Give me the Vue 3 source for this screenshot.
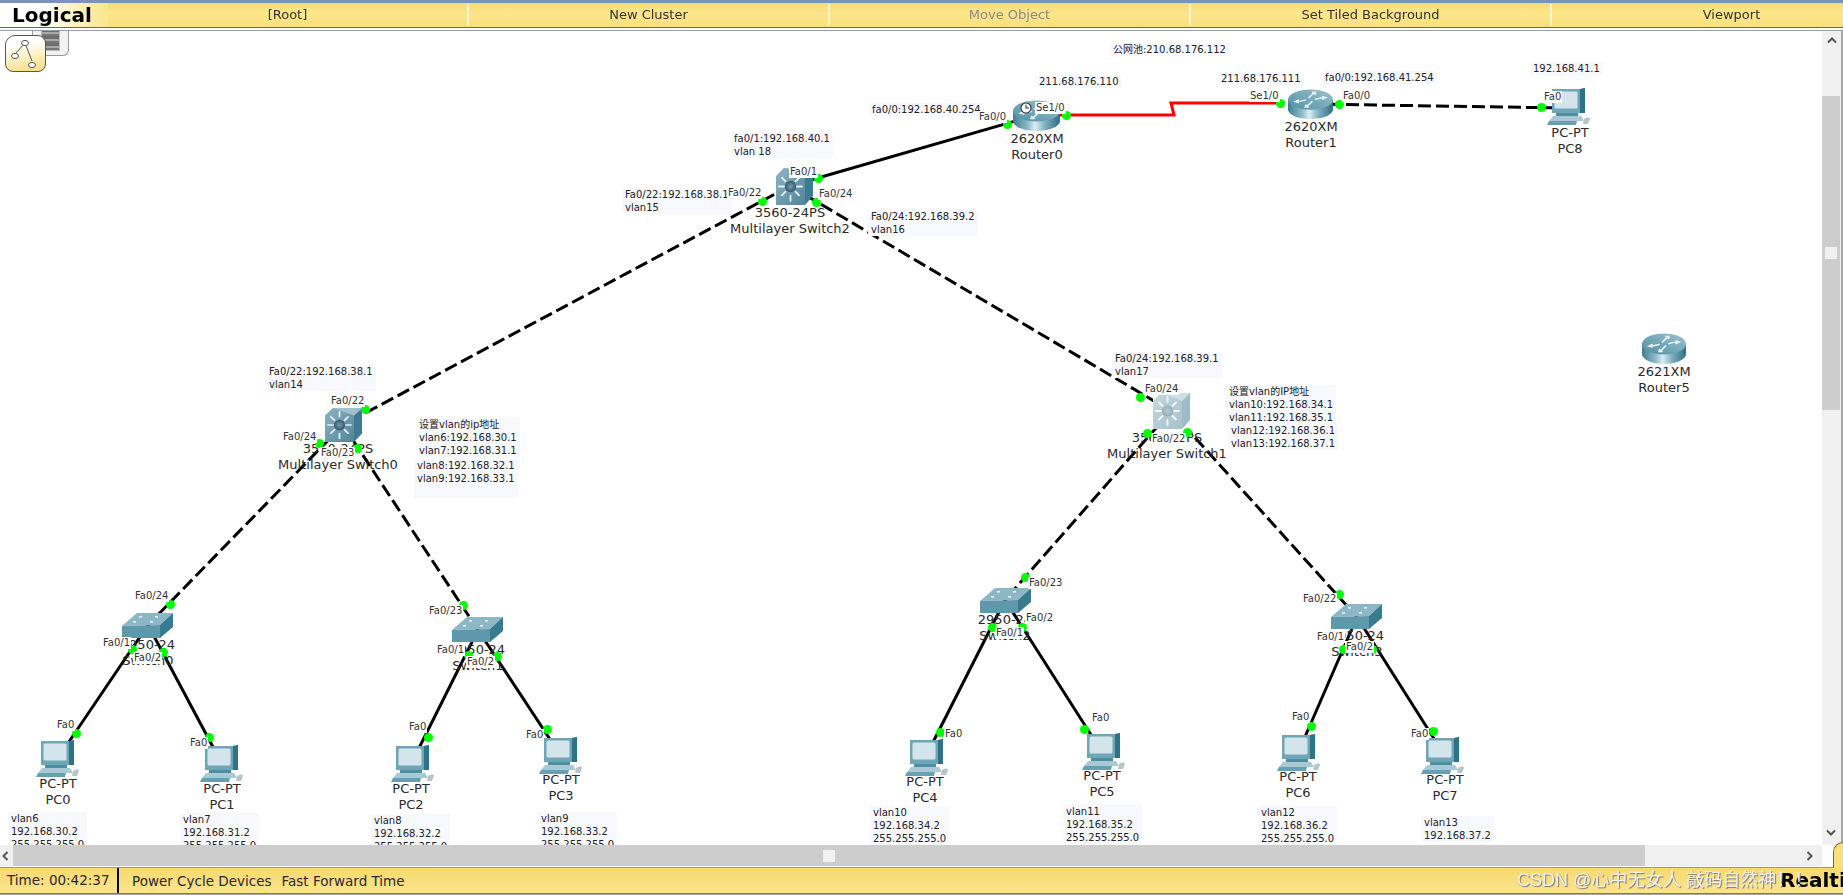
<script setup>
const TOP = 28;
const menu = ["[Root]", "New Cluster", "Move Object", "Set Tiled Background", "Viewport"];

const devices = [
  { icon: "router", x: 1013, y: 100, w: 47, h: 31, cx: 1037, ly: 139, lines: ["2620XM", "Router0"] },
  { icon: "router", x: 1288, y: 89, w: 45, h: 30, cx: 1311, ly: 127, lines: ["2620XM", "Router1"] },
  { icon: "router", x: 1642, y: 333, w: 44, h: 31, cx: 1664, ly: 372, lines: ["2621XM", "Router5"] },
  { icon: "mls", x: 776, y: 168, w: 37, h: 37, cx: 790, ly: 213, lines: ["3560-24PS", "Multilayer Switch2"] },
  { icon: "mls", x: 325, y: 408, w: 37, h: 34, cx: 338, ly: 449, lines: ["3560-24PS", "Multilayer Switch0"] },
  { icon: "mls", x: 1153, y: 393, w: 37, h: 36, cx: 1167, ly: 438, lines: ["3560-24PS", "Multilayer Switch1"], faded: true },
  { icon: "sw", x: 122, y: 613, w: 51, h: 25, cx: 148, ly: 645, lines: ["2950-24", "Switch0"] },
  { icon: "sw", x: 452, y: 617, w: 51, h: 25, cx: 478, ly: 650, lines: ["2950-24", "Switch1"] },
  { icon: "sw", x: 980, y: 588, w: 51, h: 25, cx: 1005, ly: 620, lines: ["2950-24", "Switch2"] },
  { icon: "sw", x: 1331, y: 604, w: 51, h: 25, cx: 1357, ly: 636, lines: ["2950-24", "Switch3"] },
  { icon: "pc", x: 36, y: 740, w: 44, h: 38, cx: 58, ly: 784, lines: ["PC-PT", "PC0"] },
  { icon: "pc", x: 200, y: 745, w: 44, h: 38, cx: 222, ly: 789, lines: ["PC-PT", "PC1"] },
  { icon: "pc", x: 391, y: 745, w: 44, h: 38, cx: 411, ly: 789, lines: ["PC-PT", "PC2"] },
  { icon: "pc", x: 539, y: 737, w: 44, h: 38, cx: 561, ly: 780, lines: ["PC-PT", "PC3"] },
  { icon: "pc", x: 905, y: 739, w: 44, h: 38, cx: 925, ly: 782, lines: ["PC-PT", "PC4"] },
  { icon: "pc", x: 1082, y: 733, w: 44, h: 38, cx: 1102, ly: 776, lines: ["PC-PT", "PC5"] },
  { icon: "pc", x: 1277, y: 734, w: 44, h: 38, cx: 1298, ly: 777, lines: ["PC-PT", "PC6"] },
  { icon: "pc", x: 1421, y: 737, w: 44, h: 38, cx: 1445, ly: 780, lines: ["PC-PT", "PC7"] },
  { icon: "pc", x: 1547, y: 88, w: 44, h: 38, cx: 1570, ly: 133, lines: ["PC-PT", "PC8"] },
];

const solid = [
  [1036, 115, 790, 186],
  [148, 625, 58, 758],
  [148, 625, 222, 764],
  [478, 630, 411, 764],
  [478, 630, 561, 756],
  [1005, 600, 925, 758],
  [1005, 600, 1102, 752],
  [1357, 617, 1298, 753],
  [1357, 617, 1445, 756],
];
const dashed = [
  [1310, 104, 1565, 108],
  [790, 186, 343, 425],
  [790, 186, 1171, 411],
  [343, 425, 148, 625],
  [343, 425, 478, 630],
  [1171, 411, 1005, 600],
  [1171, 411, 1357, 617],
];

const dots = [
  [1007, 124], [818, 178], [1066, 115], [1280, 103], [1339, 104], [1541, 107],
  [762, 201], [816, 202], [365, 409], [1140, 397], [319, 443], [357, 448],
  [1147, 433], [1187, 432], [170, 604], [463, 605], [1025, 577], [1339, 594],
  [132, 649], [163, 652], [76, 733], [209, 737], [468, 655], [497, 656],
  [428, 737], [547, 729], [992, 627], [1022, 627], [940, 732], [1084, 729],
  [1343, 649], [1372, 649], [1311, 726], [1433, 731],
];

const ports = [
  { t: "Fa0/0", x: 978, y: 117 }, { t: "Se1/0", x: 1035, y: 108 }, { t: "Fa0/1", x: 789, y: 172 },
  { t: "Fa0/22", x: 727, y: 193 }, { t: "Fa0/24", x: 818, y: 194 }, { t: "Se1/0", x: 1249, y: 96 },
  { t: "Fa0/0", x: 1342, y: 96 }, { t: "Fa0", x: 1543, y: 97 }, { t: "Fa0/22", x: 330, y: 401 },
  { t: "Fa0/24", x: 282, y: 437 }, { t: "Fa0/23", x: 320, y: 453 }, { t: "Fa0/24", x: 1144, y: 389 },
  { t: "Fa0/22", x: 1151, y: 439 }, { t: "Fa0/24", x: 134, y: 596 }, { t: "Fa0/1", x: 102, y: 643 },
  { t: "Fa0/2", x: 133, y: 658 }, { t: "Fa0/23", x: 428, y: 611 }, { t: "Fa0/1", x: 436, y: 650 },
  { t: "Fa0/2", x: 466, y: 662 }, { t: "Fa0/23", x: 1028, y: 583 }, { t: "Fa0/2", x: 1025, y: 618 },
  { t: "Fa0/1", x: 995, y: 633 }, { t: "Fa0/22", x: 1302, y: 599 }, { t: "Fa0/1", x: 1316, y: 637 },
  { t: "Fa0/2", x: 1345, y: 647 }, { t: "Fa0", x: 56, y: 725 }, { t: "Fa0", x: 189, y: 743 },
  { t: "Fa0", x: 408, y: 727 }, { t: "Fa0", x: 525, y: 735 }, { t: "Fa0", x: 944, y: 734 },
  { t: "Fa0", x: 1091, y: 718 }, { t: "Fa0", x: 1291, y: 717 }, { t: "Fa0", x: 1410, y: 734 },
];

const notes = [
  { x: 1110, y: 50, lines: ["公网池:210.68.176.112"] },
  { x: 1036, y: 82, lines: ["211.68.176.110"] },
  { x: 1218, y: 79, lines: ["211.68.176.111"] },
  { x: 1322, y: 78, lines: ["fa0/0:192.168.41.254"] },
  { x: 1530, y: 69, lines: ["192.168.41.1"] },
  { x: 869, y: 110, lines: ["fa0/0:192.168.40.254"] },
  { x: 731, y: 139, lines: ["fa0/1:192.168.40.1", "vlan 18"] },
  { x: 622, y: 195, lines: ["Fa0/22:192.168.38.1", "vlan15"] },
  { x: 868, y: 217, lines: ["Fa0/24:192.168.39.2", "vlan16"] },
  { x: 266, y: 372, lines: ["Fa0/22:192.168.38.1", "vlan14"] },
  { x: 416, y: 425, lines: ["设置vlan的ip地址", "vlan6:192.168.30.1", "vlan7:192.168.31.1"] },
  { x: 414, y: 466, lines: ["vlan8:192.168.32.1", "vlan9:192.168.33.1", "\u00a0"] },
  { x: 1112, y: 359, lines: ["Fa0/24:192.168.39.1", "vlan17"] },
  { x: 1226, y: 392, lines: ["设置vlan的IP地址", "vlan10:192.168.34.1", "vlan11:192.168.35.1"] },
  { x: 1228, y: 431, lines: ["vlan12:192.168.36.1", "vlan13:192.168.37.1"] },
  { x: 8, y: 819, lines: ["vlan6", "192.168.30.2", "255.255.255.0"] },
  { x: 180, y: 820, lines: ["vlan7", "192.168.31.2", "255.255.255.0"] },
  { x: 371, y: 821, lines: ["vlan8", "192.168.32.2", "255.255.255.0"] },
  { x: 538, y: 819, lines: ["vlan9", "192.168.33.2", "255.255.255.0"] },
  { x: 870, y: 813, lines: ["vlan10", "192.168.34.2", "255.255.255.0"] },
  { x: 1063, y: 812, lines: ["vlan11", "192.168.35.2", "255.255.255.0"] },
  { x: 1258, y: 813, lines: ["vlan12", "192.168.36.2", "255.255.255.0"] },
  { x: 1421, y: 823, lines: ["vlan13", "192.168.37.2"] },
];
</script>

<template>
  <div class="app">
    <header class="topbar">
      <div class="logical">Logical</div>
      <div v-for="m in menu" :key="m" class="cell" :class="{ off: m === 'Move Object' }">{{ m }}</div>
    </header>

    <div class="main">
      <div class="canvas">
        <svg class="layer" width="1822" height="817">
          <defs>
            <linearGradient id="rSide" x1="0" x2="1" y1="0" y2="0">
              <stop offset="0" stop-color="#3e7d91" />
              <stop offset=".32" stop-color="#8fbdcb" />
              <stop offset=".47" stop-color="#dcecf0" />
              <stop offset=".68" stop-color="#7fafc0" />
              <stop offset="1" stop-color="#2f6e84" />
            </linearGradient>
            <linearGradient id="rTop" x1="0" x2="1" y1="1" y2="0">
              <stop offset="0" stop-color="#4f8fa3" />
              <stop offset="1" stop-color="#9cc3cf" />
            </linearGradient>
            <linearGradient id="mFront" x1="0" x2="1" y1="0" y2="1">
              <stop offset="0" stop-color="#8fb4c3" />
              <stop offset="1" stop-color="#4f8499" />
            </linearGradient>
            <radialGradient id="mHub">
              <stop offset="0" stop-color="#7c9cac" />
              <stop offset="1" stop-color="#2f5a70" />
            </radialGradient>
            <symbol id="router" viewBox="0 0 44 31" preserveAspectRatio="none">
              <path d="M0 11V21A22 10 0 0 0 44 21V11Z" fill="url(#rSide)" />
              <ellipse cx="22" cy="11" rx="22" ry="10.5" fill="url(#rTop)" />
              <g fill="none" stroke="#e4f0f4" stroke-width="1.6" stroke-linecap="round">
                <path d="M7 13C11 13 14 12.5 17 11.5M10 14L7 13L10 11.5" />
                <path d="M37 9C33 9 30 9.5 27 10.5M34 8L37 9L34 10.5" />
                <path d="M27 3.5C24 5 22 7 20.5 9M24 3.5L27 3.5L26.5 5.5" />
                <path d="M17 18.5C20 17 22 15 23.5 13M20 18.5L17 18.5L17.5 16.5" />
              </g>
            </symbol>
            <symbol id="mls" viewBox="0 0 37 36" preserveAspectRatio="none">
              <path d="M8 0H37L29 8H0Z" fill="#9dc1ce" />
              <path d="M29 8L37 0V27L29 36Z" fill="#3f7b90" />
              <path d="M8 0L0 8V36H29V8Z" fill="url(#mFront)" />
              <g stroke="#e6f0f4" stroke-width="1.8" stroke-linecap="round">
                <path d="M14.5 4V9M14.5 27V32M3 18H8M21 18H26M6 9.5L9.5 13M19.5 23L23 26.5M23 9.5L19.5 13M9.5 23L6 26.5" />
              </g>
              <circle cx="14.5" cy="18" r="5.5" fill="url(#mHub)" />
            </symbol>
            <symbol id="sw" viewBox="0 0 51 25" preserveAspectRatio="none">
              <path d="M0 13L15 0H51L38 12Z" fill="#8db7c5" />
              <path d="M0 13L38 12V25H0Z" fill="#5f97ab" />
              <path d="M38 12L51 0V14L38 25Z" fill="#397a8f" />
              <g fill="#e8f2f5">
                <rect x="17" y="3" width="3" height="1.6" />
                <rect x="33" y="3" width="3" height="1.6" />
                <rect x="11" y="8" width="3" height="1.6" />
                <rect x="28" y="8" width="3" height="1.6" />
              </g>
            </symbol>
            <symbol id="pc" viewBox="0 0 44 38" preserveAspectRatio="none">
              <path d="M5 1H33L38 0V25H31L5 25Z" fill="#6ea6b8" />
              <path d="M33 1L38 0V25H33Z" fill="#2f7287" />
              <rect x="7.5" y="3.5" width="23" height="17" rx="1.5" fill="#d3e4ea" />
              <path d="M9 25H31V28H9Z" fill="#4d8ea3" />
              <path d="M6 28H34L37 33H2Z" fill="#a9cad5" />
              <path d="M2 33H30L29 37H0Z" fill="#66a0b3" />
              <path d="M37 31C40 29 43 29 43 31L41 36L36 36Z" fill="#b8c4c9" />
            </symbol>
          </defs>
          <line v-for="(l, i) in solid" :key="'s' + i" :x1="l[0]" :y1="l[1] - TOP" :x2="l[2]" :y2="l[3] - TOP" class="link" />
          <line v-for="(l, i) in dashed" :key="'d' + i" :x1="l[0]" :y1="l[1] - TOP" :x2="l[2]" :y2="l[3] - TOP" class="link dash" />
          <path class="serial" :d="`M1056 ${115 - TOP}H1174L1171 ${103 - TOP}H1285`" />
          <template v-for="d in devices" :key="d.lines[1]">
            <rect v-if="d.faded" :x="d.x" :y="d.y - TOP" :width="d.w" :height="d.h" fill="#fff" />
            <use :href="'#' + d.icon" :x="d.x" :y="d.y - TOP" :width="d.w" :height="d.h" :class="{ faded: d.faded }" />
          </template>
        </svg>

        <div v-for="d in devices" :key="'n' + d.lines[1]" class="devname" :style="{ left: d.cx - 80 + 'px', top: d.ly - 8 - TOP + 'px' }">
          <div v-for="t in d.lines" :key="t">{{ t }}</div>
        </div>

        <div v-for="(n, i) in notes" :key="'note' + i" class="note" :style="{ left: n.x + 'px', top: n.y - 7 - TOP + 'px' }">
          <div v-for="(t, j) in n.lines" :key="j">{{ t }}</div>
        </div>

        <span v-for="(p, i) in dots" :key="'dot' + i" class="dot" :style="{ left: p[0] - 4.5 + 'px', top: p[1] - 4.5 - TOP + 'px' }"></span>

        <span v-for="(p, i) in ports" :key="'p' + i" class="port" :style="{ left: p.x + 'px', top: p.y - 6 - TOP + 'px' }">{{ p.t }}</span>

        <svg class="clock" width="12" height="12" viewBox="0 0 12 12">
          <circle cx="6" cy="6" r="5" fill="#fff" stroke="#333" stroke-width="1.1" />
          <path d="M6 2.8V6H9" fill="none" stroke="#333" stroke-width="1.1" />
        </svg>

        <div class="tabs">
          <div class="tab-back">
            <span class="rack"></span>
          </div>
          <div class="tab-front">
            <svg width="41" height="37" viewBox="0 0 41 37">
              <path d="M20 8L10 19M20 8L27 26" stroke="#555" stroke-width="1" fill="none" />
              <ellipse cx="20" cy="8" rx="3.5" ry="2.6" fill="#fff" stroke="#555" />
              <ellipse cx="10" cy="21" rx="3.5" ry="2.6" fill="#fff" stroke="#555" />
              <ellipse cx="27" cy="30" rx="3.5" ry="2.6" fill="#fff" stroke="#555" />
            </svg>
          </div>
        </div>
      </div>

      <div class="vscroll">
        <svg class="up" width="12" height="8" viewBox="0 0 12 8"><path d="M2 6.5L6 2.5L10 6.5" fill="none" stroke="#555" stroke-width="2" /></svg>
        <div class="vthumb"><span class="grip"></span></div>
        <svg class="down" width="12" height="8" viewBox="0 0 12 8"><path d="M2 1.5L6 5.5L10 1.5" fill="none" stroke="#555" stroke-width="2" /></svg>
      </div>
    </div>

    <div class="hscroll">
      <svg class="arrow" width="8" height="12" viewBox="0 0 8 12"><path d="M6.5 2L2.5 6L6.5 10" fill="none" stroke="#555" stroke-width="2" /></svg>
      <div class="hthumb"><span class="grip"></span></div>
      <svg class="arrow right" width="8" height="12" viewBox="0 0 8 12"><path d="M1.5 2L5.5 6L1.5 10" fill="none" stroke="#555" stroke-width="2" /></svg>
    </div>

    <footer class="status">
      <div class="time">Time: 00:42:37</div>
      <div class="actions"><span>Power Cycle Devices</span><span>Fast Forward Time</span></div>
      <div class="realtime">Realtime</div>
      <div class="corner"></div>
      <div class="mark">CSDN @心中无女人 敲码自然神！！</div>
    </footer>
    <div class="strip"></div>
  </div>
</template>

<style>
html,
body {
  margin: 0;
  background: #fff;
}
</style>

<style scoped>
.app {
  width: 1843px;
  height: 895px;
  display: flex;
  flex-direction: column;
  overflow: hidden;
  font-family: "DejaVu Sans", Verdana, "Noto Sans CJK SC", sans-serif;
  color: #222;
  filter: blur(0.35px);
}
.topbar {
  height: 24px;
  flex: none;
  box-sizing: content-box;
  display: grid;
  grid-template-columns: 108px repeat(5, 361px);
  border-top: 3px solid #7b93bb;
  border-bottom: 1px solid #7d6a2a;
  background: linear-gradient(#f5db74, #fbe68c 40%, #f9e07c);
  box-shadow: 0 2px 0 #fff, 0 3px 0 #989ca6;
  position: relative;
  z-index: 3;
  overflow: hidden;
  width: 1843px;
}
.logical {
  font-size: 20px;
  font-weight: 700;
  line-height: 24px;
  color: #000;
  padding-left: 12px;
  background: linear-gradient(90deg, #fff 40%, #fdf0b4 75%, #fbe68c);
}
.cell {
  text-align: center;
  font-size: 13px;
  line-height: 22px;
  color: #333;
  border-right: 2px solid #fff5cd;
  margin: 1px 0;
}
.cell.off {
  color: #8a8a84;
}
.main {
  height: 817px;
  flex: none;
  display: flex;
}
.canvas {
  position: relative;
  flex: 1;
  overflow: hidden;
  background: #fff;
}
.layer {
  position: absolute;
  inset: 0;
}
.link {
  stroke: #000;
  stroke-width: 3;
}
.dash {
  stroke-dasharray: 13 5;
}
.serial {
  fill: none;
  stroke: #f00;
  stroke-width: 3;
}
.faded {
  opacity: 0.5;
}
.devname {
  position: absolute;
  width: 160px;
  text-align: center;
  font-size: 13px;
  line-height: 16px;
  color: #2a2a2a;
  white-space: nowrap;
}
.note {
  position: absolute;
  padding: 0 3px;
  background: #f8f8ff;
  font-size: 10px;
  line-height: 13px;
  color: #222;
  white-space: nowrap;
}
.dot {
  position: absolute;
  width: 9px;
  height: 9px;
  border-radius: 50%;
  background: #0f0;
}
.port {
  position: absolute;
  padding: 0 1px;
  background: #fff;
  font-size: 10px;
  line-height: 12px;
  color: #333;
  white-space: nowrap;
}
.clock {
  position: absolute;
  left: 1020px;
  top: 74px;
}
.tabs {
  position: absolute;
  left: 0;
  top: 0;
}
.tab-back {
  position: absolute;
  left: 32px;
  top: 0;
  width: 37px;
  height: 28px;
  box-sizing: border-box;
  background: #f2f2f2;
  border: 1px solid #999;
  border-top: 0;
  border-bottom-right-radius: 6px;
}
.rack {
  position: absolute;
  left: 8px;
  top: 0;
  width: 19px;
  height: 23px;
  background: repeating-linear-gradient(#6d6d6d 0 3px, #a8a8a8 3px 5px, #777 5px 7px);
  border: 1px solid #bbb;
  box-sizing: border-box;
}
.tab-front {
  position: absolute;
  left: 5px;
  top: 7px;
  width: 41px;
  height: 37px;
  box-sizing: border-box;
  border: 1px solid #555;
  border-radius: 10px 8px 8px 8px;
  background: linear-gradient(170deg, #fff 25%, #f8db7c);
}
.tab-front svg {
  position: absolute;
  left: -1px;
  top: -1px;
}
.vscroll {
  width: 19px;
  flex: none;
  margin-right: 2px;
  background: #f0f0f0;
  position: relative;
  box-shadow: 2px 0 0 #a6a6ac;
}
.up {
  position: absolute;
  left: 4px;
  top: 8px;
}
.down {
  position: absolute;
  left: 3px;
  bottom: 8px;
}
.vthumb {
  position: absolute;
  left: 0;
  right: 1px;
  top: 68px;
  height: 314px;
  background: #cdcdcd;
  display: flex;
  align-items: center;
  justify-content: center;
}
.grip {
  width: 12px;
  height: 12px;
  background: #f0f0f0;
  display: block;
}
.hscroll {
  height: 21px;
  flex: none;
  width: 1822px;
  background: #f0f0f0;
  position: relative;
}
.arrow {
  position: absolute;
  left: 1px;
  top: 5px;
}
.arrow.right {
  left: 1806px;
}
.hthumb {
  position: absolute;
  left: 13px;
  width: 1632px;
  top: 0;
  bottom: 0;
  background: #cdcdcd;
  display: flex;
  align-items: center;
  justify-content: center;
}
.status {
  height: 27px;
  flex: none;
  margin-top: 1px;
  display: flex;
  align-items: center;
  position: relative;
  border-top: 1px solid #a89a50;
  border-bottom: 1px solid #8d7a35;
  background: linear-gradient(#f7d96f, #fbe48c);
  font-size: 13.5px;
  color: #2a2a2a;
  box-sizing: border-box;
}
.time {
  width: 119px;
  padding-left: 7px;
  box-sizing: border-box;
  border-right: 2px solid #000;
  height: 100%;
  line-height: 25px;
  white-space: nowrap;
}
.actions {
  padding-left: 13px;
  display: flex;
  gap: 10px;
}
.realtime {
  position: absolute;
  left: 1780px;
  top: 0;
  font-size: 20px;
  font-weight: 700;
  line-height: 25px;
  color: #000;
  white-space: nowrap;
}
.corner {
  position: absolute;
  left: 1833px;
  top: -26px;
  width: 20px;
  height: 26px;
  box-sizing: border-box;
  border: 1px solid #7d6a2a;
  border-bottom: 0;
  border-top-left-radius: 10px;
  background: #f9e07c;
}
.mark {
  position: absolute;
  left: 1517px;
  top: 0;
  font-family: "Liberation Sans", "Noto Sans CJK SC", sans-serif;
  font-size: 18px;
  line-height: 24px;
  color: #efefef;
  text-shadow: 1px 1px 1px #777;
  white-space: nowrap;
}
.strip {
  height: 2px;
  flex: none;
  background: #ededed;
  border-top: 1px solid #a8a8a8;
}
</style>
